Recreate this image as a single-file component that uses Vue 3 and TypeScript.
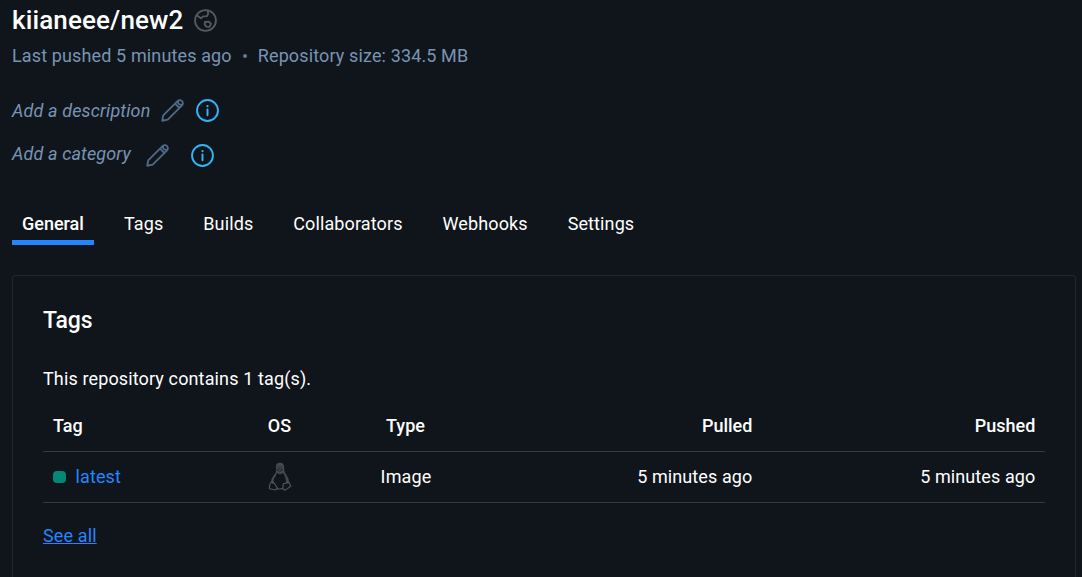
<script setup lang="ts">
interface TagRow {
  name: string
  type: string
  pulled: string
  pushed: string
}

const tabs: string[] = ['General', 'Tags', 'Builds', 'Collaborators', 'Webhooks', 'Settings']
const activeTab = 'General'

const fields = [
  { key: 'description', label: 'Add a description' },
  { key: 'category', label: 'Add a category' },
]

const rows: TagRow[] = [
  { name: 'latest', type: 'Image', pulled: '5 minutes ago', pushed: '5 minutes ago' },
]
</script>

<template>
  <main class="page">
    <header class="title-row">
      <h1>kiianeee/new2</h1>
      <svg class="globe" viewBox="0 0 24 24" aria-hidden="true">
        <circle cx="12" cy="12" r="10.9" />
        <path d="M2.8 6.6 7.2 9.7 9.6 7.7 13.6 7.4 14.8 4.8 14.3 1.8M11.4 13.4 15.6 13.2 17.7 15.5 16.2 18.6 12.8 18.4 11.2 16.2Z" />
      </svg>
    </header>
    <p class="meta">
      <span>Last pushed 5 minutes ago</span><i class="dot"></i><span>Repository size: 334.5 MB</span>
    </p>

    <div v-for="f in fields" :key="f.key" class="field" :class="f.key">
      <em>{{ f.label }}</em>
      <svg class="pencil" viewBox="0 0 24 24" aria-hidden="true">
        <path d="M1.3 22.7 2.3 17 17 2.4Q19.4 .2 21.9 2.1Q23.8 4.6 21.7 7L7 21.6ZM14.6 4.8 19.2 9.4M18 2Q17 6 21.8 6.2" />
      </svg>
      <svg class="info" viewBox="0 0 24 24" aria-hidden="true">
        <circle cx="12" cy="12" r="10.9" />
        <path d="M12 11V17" />
        <circle class="fill" cx="12" cy="7.4" r="1.2" />
      </svg>
    </div>

    <nav class="tabs">
      <a v-for="t in tabs" :key="t" class="tab" :class="{ active: t === activeTab }">{{ t }}</a>
    </nav>

    <section class="card">
      <h2>Tags</h2>
      <p class="summary">This repository contains 1 tag(s).</p>
      <div class="row head">
        <span>Tag</span>
        <span class="center">OS</span>
        <span class="center">Type</span>
        <span class="right">Pulled</span>
        <span class="right">Pushed</span>
      </div>
      <div v-for="r in rows" :key="r.name" class="row">
        <span class="tag-name"><i class="status"></i><a>{{ r.name }}</a></span>
        <span class="center os">
          <svg class="tux" viewBox="0 0 24 29" aria-hidden="true">
            <path class="shade" d="M8.7 9.2 8.3 4Q8.6 1 12 1Q15.3 1 15.6 4L15.9 8.5Q16.3 10.6 18 13Q21 17 20.6 21L18.6 21.1Q18.7 15.5 15.4 10.5L12 12 8.7 10.4Q7.8 14 5.6 16.5Q4.7 19 5 21.5L3.4 20.4Q3.4 16.5 6.1 13.5Q8.4 11 8.7 9.2Z" />
            <path class="beak" d="M9.2 7.5 12 6.7 14.8 7.7 12 9.7ZM9.9 4.9H10.9M13 4.9H14" />
            <path d="M2.5 20.7 5.2 20 7.6 23.2 9.3 25.8 7.8 28 1.4 26.8 1.5 24.2ZM15.4 21.8 17.2 21.2 20.9 20.3 22.8 24 19.5 26.6 16.8 28.2 14.7 26.6ZM8.5 26.4Q11.5 27.5 14.8 26.3" />
          </svg>
        </span>
        <span class="center type">{{ r.type }}</span>
        <span class="right">{{ r.pulled }}</span>
        <span class="right">{{ r.pushed }}</span>
      </div>
      <a class="see-all">See all</a>
    </section>
  </main>
</template>

<style>
body {
  background: #10151b;
}
</style>

<style scoped>
.page {
  box-sizing: border-box;
  height: 577px;
  overflow: hidden;
  padding: 5px 6px 0 12px;
  background: #10151b;
  color: #fff;
  font-family: Roboto, "Liberation Sans", sans-serif;
  font-size: 18px;
  letter-spacing: 0.13px;
  line-height: 24px;
}
h1, h2, p { margin: 0; }
svg {
  flex: none;
  fill: none;
  stroke-linecap: round;
  stroke-linejoin: round;
}
.title-row {
  display: flex;
  align-items: flex-start;
  height: 30px;
}
h1 {
  font-size: 26px;
  font-weight: 500;
  letter-spacing: 0.13px;
  line-height: 30px;
}
.globe {
  width: 23px;
  height: 23px;
  margin: 4px 0 0 10.5px;
  stroke: #56595d;
  stroke-width: 1.9;
}
.meta {
  display: flex;
  align-items: center;
  margin-top: 9px;
  color: #7794b4;
}
.dot {
  width: 4px;
  height: 4px;
  margin: 0 11px;
  border-radius: 50%;
  background: #617b98;
}
.field {
  display: flex;
  align-items: flex-start;
  height: 24px;
  color: #7794b4;
}
.description { margin-top: 31px; }
.category { margin-top: 19px; }
.pencil {
  width: 23px;
  height: 23px;
  margin-left: 11px;
  stroke: #506a85;
  stroke-width: 1.9;
}
.info {
  width: 23px;
  height: 23px;
  margin-left: 12px;
  stroke: #2fb5f8;
  stroke-width: 2;
}
.info .fill { fill: #2fb5f8; stroke: none; }
.category svg { margin-top: 2px; }
.category .pencil { margin-left: 15px; }
.category .info { margin-left: 22px; }
.tabs {
  display: flex;
  gap: 20px;
  margin-top: 46px;
}
.tab {
  height: 28px;
  padding: 0 10px;
  border-bottom: 5px solid transparent;
  letter-spacing: 0.11px;
}
.tab.active {
  border-color: #2584ff;
  font-weight: 500;
  letter-spacing: 0;
}
.card {
  height: 340px;
  margin-top: 30px;
  padding: 0 30px;
  border: 1px solid #21272e;
  border-radius: 3px;
}
h2 {
  margin-top: 30px;
  font-size: 23px;
  font-weight: 500;
  letter-spacing: -0.1px;
  line-height: 30px;
}
.summary { margin-top: 31px; }
.row {
  display: grid;
  grid-template-columns: 185px 103px 149px 282px 283px;
  align-items: center;
  box-sizing: border-box;
  height: 51px;
  border-bottom: 1px solid #2b3b48;
}
.row > span { padding: 0 10px; }
.row > .type { padding-left: 11px; }
.row.head {
  height: 61px;
  padding-top: 9px;
  font-weight: 500;
  letter-spacing: 0;
}
.row.head > .type { padding-left: 10px; }
.center { text-align: center; }
.row > .right {
  padding-right: 9.6px;
  text-align: right;
}
.row:not(.head) > .right { letter-spacing: 0.1px; }
.tag-name {
  display: flex;
  align-items: center;
  color: #2584ff;
}
.status {
  width: 13px;
  height: 12px;
  margin-right: 9.5px;
  border-radius: 4px;
  background: #058775;
}
.os {
  display: flex;
  justify-content: center;
}
.tux {
  width: 24px;
  height: 29px;
  margin-top: -1px;
  stroke: #55585c;
  stroke-width: 1.1;
}
.tux .shade { fill: #45484c; stroke-width: .6; }
.tux .beak { stroke: #1b2026; stroke-width: .8; }
.see-all {
  display: inline-block;
  margin-top: 21px;
  color: #2584ff;
  text-decoration: underline;
}
</style>
